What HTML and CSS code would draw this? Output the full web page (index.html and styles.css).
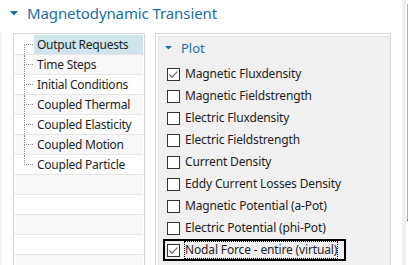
FILE: index.html
```html
<!DOCTYPE html>
<html lang="en">
<head>
    <meta charset="UTF-8">
    <title>Magnetodynamic Transient</title>
    <link rel="stylesheet" href="styles.css">
</head>
<body>
    <div class="window">
        <div class="main">
            <div class="header">
                <svg class="caret" width="8" height="5" viewBox="0 0 8 5"><polygon points="0,0 8,0 4,4.5" fill="#1a6ea6"/></svg>
                <span class="title">Magnetodynamic Transient</span>
            </div>
            <div class="content">
                <div class="tree">
                    <div class="row first"><span class="indent"></span><span class="branch"><span class="up"></span><span class="down"></span></span><span class="label selected">Output Requests</span></div>
                    <div class="row alt"><span class="indent"></span><span class="branch"><span class="up"></span><span class="down"></span></span><span class="label">Time Steps</span></div>
                    <div class="row"><span class="indent"></span><span class="branch"><span class="up"></span><span class="down"></span></span><span class="label">Initial Conditions</span></div>
                    <div class="row alt"><span class="indent"></span><span class="branch"><span class="up"></span><span class="down"></span></span><span class="label">Coupled Thermal</span></div>
                    <div class="row"><span class="indent"></span><span class="branch"><span class="up"></span><span class="down"></span></span><span class="label">Coupled Elasticity</span></div>
                    <div class="row alt"><span class="indent"></span><span class="branch"><span class="up"></span><span class="down"></span></span><span class="label">Coupled Motion</span></div>
                    <div class="row last"><span class="indent"></span><span class="branch"><span class="up"></span><span class="down"></span></span><span class="label">Coupled Particle</span></div>
                    <div class="row alt"></div>
                    <div class="row"></div>
                    <div class="row alt"></div>
                    <div class="row"></div>
                    <div class="row alt"></div>
                </div>
                <div class="panel">
                    <div class="panel-body">
                        <div class="section-head">
                            <svg class="caret small" width="7" height="4" viewBox="0 0 7 4"><polygon points="0,0 7,0 3.5,3.5" fill="#1a6ea6"/></svg>
                            <span>Plot</span>
                        </div>
                        <div class="checks">
                            <div class="check"><span class="box checked"><svg width="11" height="11" viewBox="0 0 11 11"><polyline points="1.5,5.5 4.2,8.2 9.5,2.5" fill="none" stroke="#555" stroke-width="1.1"/></svg></span><span class="text">Magnetic Fluxdensity</span></div>
                            <div class="check"><span class="box"></span><span class="text">Magnetic Fieldstrength</span></div>
                            <div class="check"><span class="box"></span><span class="text">Electric Fluxdensity</span></div>
                            <div class="check"><span class="box"></span><span class="text">Electric Fieldstrength</span></div>
                            <div class="check"><span class="box"></span><span class="text">Current Density</span></div>
                            <div class="check"><span class="box"></span><span class="text">Eddy Current Losses Density</span></div>
                            <div class="check"><span class="box"></span><span class="text">Magnetic Potential (a-Pot)</span></div>
                            <div class="check"><span class="box"></span><span class="text">Electric Potential (phi-Pot)</span></div>
                            <div class="check focused"><span class="box checked"><svg width="11" height="11" viewBox="0 0 11 11"><polyline points="1.5,5.5 4.2,8.2 9.5,2.5" fill="none" stroke="#555" stroke-width="1.1"/></svg></span><span class="text">Nodal Force - entire (virtual)</span></div>
                        </div>
                    </div>
                </div>
            </div>
        </div>
        <div class="gutter"></div>
        <div class="scroll"><div class="track"></div></div>
    </div>
</body>
</html>
```

FILE: styles.css
```css
body {
    margin: 0;
    background: #fff;
    font-family: "Noto Sans", "Open Sans", sans-serif;
    font-size: 12px;
    color: #1e1e1e;
    overflow: hidden;
}
.window {
    display: flex;
    width: 409px;
    height: 265px;
    overflow: hidden;
}
.main {
    width: 402px;
}
.gutter {
    width: 4px;
    background: #f0f0f0;
}
.scroll {
    width: 3px;
    padding-top: 4px;
}
.track {
    width: 1px;
    height: 216px;
    margin-left: 1px;
    background: #a9b1b5;
    border-bottom: 1px solid #444;
}
.header {
    height: 26px;
    display: flex;
    align-items: center;
    padding-left: 10px;
}
.caret {
    display: block;
}
.title {
    margin-left: 9px;
    font-size: 15px;
    color: #1a6ea6;
    letter-spacing: -0.1px;
}
.content {
    display: flex;
    align-items: flex-start;
    margin-top: 7px;
    padding-left: 11px;
    border-left: 2px solid #f3f3f3;
    height: 232px;
}
.tree {
    width: 132px;
    height: 240px;
    box-sizing: border-box;
    border: 1px solid #d6d6d6;
    padding: 1px 1px 0;
}
.row {
    display: flex;
    height: 20px;
    box-sizing: border-box;
    border-bottom: 1px solid #e6e6e6;
    background: #fff;
}
.row.alt {
    background: #f8f8f8;
}
.indent {
    width: 9px;
}
.branch {
    width: 9px;
    display: flex;
    flex-direction: column;
}
.branch .up {
    height: 9px;
    border-left: 1px dotted #8c8c8c;
    border-bottom: 1px dotted #8c8c8c;
}
.branch .down {
    flex: 1;
    border-left: 1px dotted #8c8c8c;
}
.row.first .up {
    border-left-color: transparent;
}
.row.last .down {
    border-left-color: transparent;
}
.label {
    flex: 1;
    padding-left: 3px;
    margin-left: 1px;
    line-height: 19px;
    white-space: nowrap;
    letter-spacing: -0.25px;
}
.label.selected {
    background: #cde5eb;
}
.panel {
    margin-left: 10px;
    width: 236px;
    height: 240px;
    box-sizing: border-box;
    border: 1px solid #d9d9d9;
    padding: 2px 0 0 2px;
    background: #fff;
}
.panel-body {
    height: 100%;
    border-top: 1px solid #e2e2e2;
    border-left: 1px solid #e2e2e2;
    background: #f0f0f0;
}
.section-head {
    height: 22px;
    display: flex;
    align-items: center;
    padding-left: 6px;
    color: #1a6ea6;
    font-size: 13px;
}
.section-head span {
    margin-left: 9px;
}
.checks {
    margin-top: 4px;
    margin-left: 4px;
}
.check {
    width: 183px;
    height: 22px;
    box-sizing: border-box;
    border: 2px solid transparent;
    display: flex;
    align-items: center;
    padding-left: 2px;
}
.check.focused {
    border-color: #000;
}
.box {
    width: 13px;
    height: 13px;
    box-sizing: border-box;
    border: 1px solid #333;
    background: #fff;
    display: flex;
    align-items: center;
    justify-content: center;
}
.text {
    margin-left: 4px;
    border: 1px dotted transparent;
    line-height: 16px;
    white-space: nowrap;
    letter-spacing: -0.15px;
}
.check.focused .text {
    border-color: #000;
}
```
